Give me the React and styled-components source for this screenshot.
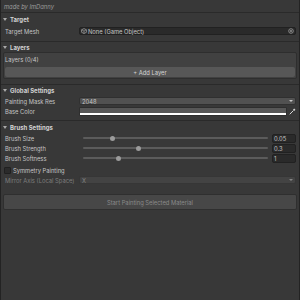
import React from 'react';
import styled, { createGlobalStyle } from 'styled-components';

const GlobalStyle = createGlobalStyle`
  html, body { margin: 0; padding: 0; background: #383838; }
  body { font-family: Inter, "Liberation Sans", sans-serif; }
  * { box-sizing: border-box; }
`;

const Panel = styled.div`
  width: 300px;
  height: 300px;
  background: #383838;
  border-left: 1px solid #232323;
  border-right: 1px solid #232323;
  display: flex;
  flex-direction: column;
  overflow: hidden;
  font-size: 5.8px;
  color: #c4c4c4;
`;

const Credit = styled.div`
  height: 12px;
  padding-left: 3px;
  display: flex;
  align-items: center;
  font-style: italic;
  color: #9c9c9c;
`;

const Section = styled.section`
  border-top: 1px solid #2a2a2a;
  padding-bottom: ${(p) => p.$pb}px;
  display: flex;
  flex-direction: column;
`;

const Header = styled.div`
  height: ${(p) => p.$h}px;
  padding-left: 2px;
  display: flex;
  align-items: center;
  font-weight: 700;
  font-size: 6px;
  color: #d2d2d2;
`;

const Fold = styled.span`
  width: 0;
  height: 0;
  border-left: 2px solid transparent;
  border-right: 2px solid transparent;
  border-top: 3px solid #a8a8a8;
  margin-right: 3px;
`;

const Row = styled.div`
  height: 10px;
  padding: 0 3px 0 4px;
  display: grid;
  grid-template-columns: 74px 1fr;
  align-items: center;
  color: ${(p) => (p.$disabled ? '#7e7e7e' : '#c4c4c4')};
  white-space: nowrap;
`;

const SliderRowGrid = styled(Row)`
  grid-template-columns: 74px 1fr 24px;
  column-gap: 4px;
`;

const ObjectField = styled.div`
  height: 8px;
  background: #2a2a2a;
  border: 1px solid #212121;
  border-radius: 2px;
  display: flex;
  align-items: center;
  padding: 0 1px 0 1px;
  gap: 1px;
  color: #c4c4c4;
`;

const Grow = styled.span`
  flex: 1;
`;

const Dropdown = styled.div`
  height: 8px;
  background: ${(p) => (p.$disabled ? '#434343' : '#515151')};
  border: 1px solid ${(p) => (p.$disabled ? '#363636' : '#303030')};
  border-radius: 2px;
  display: flex;
  align-items: center;
  justify-content: space-between;
  padding: 0 2px 0 2px;
  color: ${(p) => (p.$disabled ? '#848484' : '#c4c4c4')};
`;

const Arrow = styled.span`
  width: 0;
  height: 0;
  border-left: 2px solid transparent;
  border-right: 2px solid transparent;
  border-top: 2px solid ${(p) => (p.$disabled ? '#858585' : '#c8c8c8')};
`;

const ColorWrap = styled.div`
  display: flex;
  align-items: center;
  gap: 2px;
`;

const Swatch = styled.div`
  flex: 1;
  height: 9px;
  display: flex;
  flex-direction: column;
  border: 1px solid #2e2e2e;
  border-radius: 1px;
  overflow: hidden;
`;

const SwatchColor = styled.div`
  flex: 1;
  background: ${(p) => p.$color};
`;

const AlphaBar = styled.div`
  height: 2px;
  background: #ffffff;
`;

const ListBox = styled.div`
  margin: 0 2px;
  height: 27px;
  background: #414141;
  border: 1px solid #2e2e2e;
  border-radius: 2px;
  display: flex;
  flex-direction: column;
`;

const ListHeader = styled.div`
  height: 13px;
  padding-left: 1px;
  display: flex;
  align-items: center;
  color: #c8c8c8;
`;

const AddButton = styled.div`
  margin: 1px 1px 0 1px;
  height: 10px;
  background: #575757;
  border-radius: 2px;
  display: flex;
  align-items: center;
  justify-content: center;
  color: #d4d4d4;
`;

const Track = styled.div`
  position: relative;
  height: 8px;
  display: flex;
  align-items: center;
`;

const TrackLine = styled.div`
  flex: 1;
  height: 2px;
  border-radius: 1px;
  background: #5b5b5b;
`;

const Thumb = styled.span`
  position: absolute;
  top: 1.5px;
  width: 5px;
  height: 5px;
  margin-left: -2.5px;
  border-radius: 50%;
  background: #9b9b9b;
`;

const ValueBox = styled.div`
  height: 9px;
  background: #2a2a2a;
  border: 1px solid #212121;
  border-radius: 2px;
  padding-left: 1px;
  display: flex;
  align-items: center;
  color: #c4c4c4;
`;

const ToggleRow = styled.div`
  height: 10px;
  margin-top: 2px;
  padding-left: 3px;
  display: flex;
  align-items: center;
  gap: 2px;
  color: #c4c4c4;
`;

const Checkbox = styled.span`
  width: 7px;
  height: 7px;
  background: #2b2b2b;
  border: 1px solid #202020;
  border-radius: 1px;
`;

const ActionButton = styled.div`
  margin: 9px 2px 0 2px;
  height: 16px;
  background: #474747;
  border: 1px solid #2f2f2f;
  border-radius: 2px;
  display: flex;
  align-items: center;
  justify-content: center;
  color: #8a8a8a;
`;

const GameObjectIcon = () => (
  <svg width="6" height="6" viewBox="0 0 6 6">
    <path d="M3 0.6 L5.4 1.8 L5.4 4.3 L3 5.5 L0.6 4.3 L0.6 1.8 Z" fill="none" stroke="#a8a8a8" strokeWidth="0.7" />
    <path d="M0.6 1.8 L3 3 L5.4 1.8 M3 3 L3 5.5" fill="none" stroke="#a8a8a8" strokeWidth="0.6" />
  </svg>
);

const PickerIcon = () => (
  <svg width="6" height="6" viewBox="0 0 6 6">
    <circle cx="3" cy="3" r="2.3" fill="none" stroke="#9c9c9c" strokeWidth="0.8" />
    <circle cx="3" cy="3" r="0.9" fill="#9c9c9c" />
  </svg>
);

const EyeDropper = () => (
  <svg width="7" height="7" viewBox="0 0 7 7">
    <path d="M1 6 L4.2 2.8" stroke="#d8d8d8" strokeWidth="1" strokeLinecap="round" />
    <path d="M4 1.8 L5.2 0.6 L6.4 1.8 L5.2 3 Z" fill="#d8d8d8" />
  </svg>
);

const sliders = [
  { label: 'Brush Size', value: '0.05', ratio: 0.16 },
  { label: 'Brush Strength', value: '0.3', ratio: 0.3 },
  { label: 'Brush Softness', value: '1', ratio: 0.19 },
];

const SliderRow = ({ label, value, ratio }) => (
  <SliderRowGrid>
    <span>{label}</span>
    <Track>
      <TrackLine />
      <Thumb style={{ left: `${ratio * 100}%` }} />
    </Track>
    <ValueBox>{value}</ValueBox>
  </SliderRowGrid>
);

export default function App() {
  return (
    <>
      <GlobalStyle />
      <Panel>
        <Credit>made by ImDanny</Credit>

        <Section $pb={5}>
          <Header $h={13}><Fold />Target</Header>
          <Row>
            <span>Target Mesh</span>
            <ObjectField>
              <GameObjectIcon />
              <Grow>None (Game Object)</Grow>
              <PickerIcon />
            </ObjectField>
          </Row>
        </Section>

        <Section $pb={5}>
          <Header $h={10}><Fold />Layers</Header>
          <ListBox>
            <ListHeader>Layers (0/4)</ListHeader>
            <AddButton>+ Add Layer</AddButton>
          </ListBox>
        </Section>

        <Section $pb={4}>
          <Header $h={11}><Fold />Global Settings</Header>
          <Row>
            <span>Painting Mask Res</span>
            <Dropdown>
              <span>2048</span>
              <Arrow />
            </Dropdown>
          </Row>
          <Row>
            <span>Base Color</span>
            <ColorWrap>
              <Swatch>
                <SwatchColor $color="#575757" />
                <AlphaBar />
              </Swatch>
              <EyeDropper />
            </ColorWrap>
          </Row>
        </Section>

        <Section $pb={0}>
          <Header $h={12}><Fold />Brush Settings</Header>
          {sliders.map((s) => (
            <SliderRow key={s.label} {...s} />
          ))}
          <ToggleRow>
            <Checkbox />
            <span>Symmetry Painting</span>
          </ToggleRow>
          <Row $disabled>
            <span>Mirror Axis (Local Space)</span>
            <Dropdown $disabled>
              <span>X</span>
              <Arrow $disabled />
            </Dropdown>
          </Row>
          <ActionButton>Start Painting Selected Material</ActionButton>
        </Section>
      </Panel>
    </>
  );
}
